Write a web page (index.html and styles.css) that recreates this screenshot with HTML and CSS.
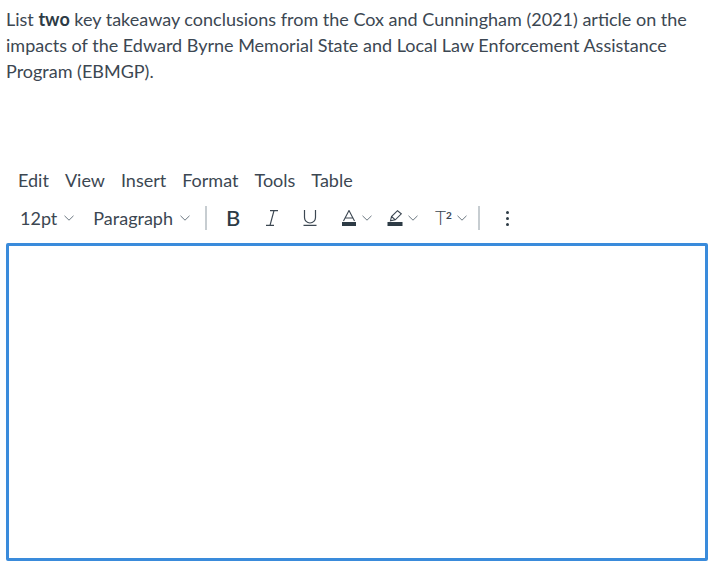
FILE: index.html
```html
<!DOCTYPE html>
<html lang="en">
<head>
<meta charset="utf-8">
<title>Question</title>
<link rel="stylesheet" href="styles.css">
</head>
<body>
<main class="page">
  <p class="question">List <strong>two</strong> key takeaway conclusions from the Cox and Cunningham (2021) article on the impacts of the Edward Byrne Memorial State and Local Law Enforcement Assistance Program (EBMGP).</p>
  <nav class="menubar">
    <span>Edit</span><span>View</span><span>Insert</span><span>Format</span><span>Tools</span><span>Table</span>
  </nav>
  <div class="toolbar">
    <span class="select first">12pt <svg class="chev" viewBox="0 0 10 6"><path d="M.5.8 5 5.200 9.500.8"/></svg></span>
    <span class="select second">Paragraph <svg class="chev" viewBox="0 0 10 6"><path d="M.5.8 5 5.200 9.500.8"/></svg></span>
    <span class="sep sep-a"></span>
    <span class="bold">B</span>
    <svg class="icon italic" viewBox="0 0 16 16"><path d="M6 .6h8M2 15.400h8M10 .6 6 15.400"/></svg>
    <svg class="icon underline" viewBox="0 0 16 16"><path d="M2.500 0v7.500a5.500 5.500 0 0 0 11 0V0M1.500 15.400h13"/></svg>
    <span class="group color">
      <svg class="icon-wide" viewBox="0 0 16 16"><path d="M2.500 11 8 .5l5.500 10.500M4.200 8h7.600"/><rect class="fill" x="1" y="12" width="14" height="4"/></svg>
      <svg class="chev" viewBox="0 0 10 6"><path d="M.5.8 5 5.200 9.500.8"/></svg>
    </span>
    <span class="group highlight">
      <svg class="icon-wide" viewBox="0 0 16 16"><path d="M3.500 10.800 4.500 6.500 10.500.7l3.800 3.100-6 6-4.800 1zM4.500 6.500l3.800 3.300"/><rect class="fill" x="0.500" y="12" width="15" height="4"/></svg>
      <svg class="chev" viewBox="0 0 10 6"><path d="M.5.8 5 5.200 9.500.8"/></svg>
    </span>
    <span class="group super">
      <span class="tee">T<sup>2</sup></span>
      <svg class="chev" viewBox="0 0 10 6"><path d="M.5.8 5 5.200 9.500.8"/></svg>
    </span>
    <span class="sep sep-b"></span>
    <span class="dots"><i></i><i></i><i></i></span>
  </div>
  <div class="editor"></div>
</main>
</body>
</html>
```
FILE: styles.css
```css
* { box-sizing: border-box; }
html, body { margin: 0; padding: 0; background: #fff; }
body {
  width: 710px;
  height: 578px;
  overflow: hidden;
  font-family: Lato, "Open Sans", sans-serif;
  color: #2d3b45;
}
.page { padding: 6px 2px 0 6px; }
.question {
  margin: 0;
  font-size: 18px;
  line-height: 26px;
  color: #3c4752;
  width: 700px;
}
.question strong { font-weight: 700; color: #2d3b45; }
.menubar {
  display: flex;
  gap: 16px;
  margin-top: 83px;
  padding-left: 12px;
  font-size: 18px;
  line-height: 26px;
  color: #3c4752;
}
.toolbar {
  display: flex;
  align-items: center;
  height: 24px;
  margin-top: 13px;
  font-size: 18px;
  line-height: 24px;
  color: #3c4752;
}
.select { display: flex; align-items: center; gap: 7px; }
.first { margin-left: 14px; }
.second { margin-left: 19px; }
.chev { width: 10px; height: 6px; fill: none; stroke: #6b7780; stroke-width: 1; flex: none; }
.sep { width: 2px; height: 24px; background: #c7cdd1; flex: none; }
.sep-a { margin-left: 15px; }
.bold { margin-left: 19px; font-size: 22px; font-weight: 500; width: 16px; color: #2d3b45; }
.icon { width: 16px; height: 16px; fill: none; stroke: #3c4752; stroke-width: 1.200; flex: none; }
.italic { margin-left: 22px; }
.underline { margin-left: 22px; }
.group { display: flex; align-items: center; gap: 5px; flex: none; }
.icon-wide { width: 16px; height: 16px; fill: none; stroke: #3c4752; stroke-width: 1.100; flex: none; }
.fill { fill: #2d3b45; stroke: none; }
.color { margin-left: 23px; }
.highlight { margin-left: 15px; }
.super { margin-left: 17px; }
.tee { font-size: 19px; font-weight: 300; line-height: 18px; width: 17px; color: #3c4752; white-space: nowrap; }
.tee sup { font-size: 10px; font-weight: 700; line-height: 0; vertical-align: 6px; }
.sep-b { margin-left: 11px; }
.dots { display: flex; flex-direction: column; gap: 3px; margin-left: 26px; }
.dots i { display: block; width: 3px; height: 3px; border-radius: 50%; background: #2d3b45; }
.editor {
  width: 702px;
  height: 318px;
  margin-top: 13px;
  border: 3px solid #3a8bdb;
  border-radius: 2px;
}
```
